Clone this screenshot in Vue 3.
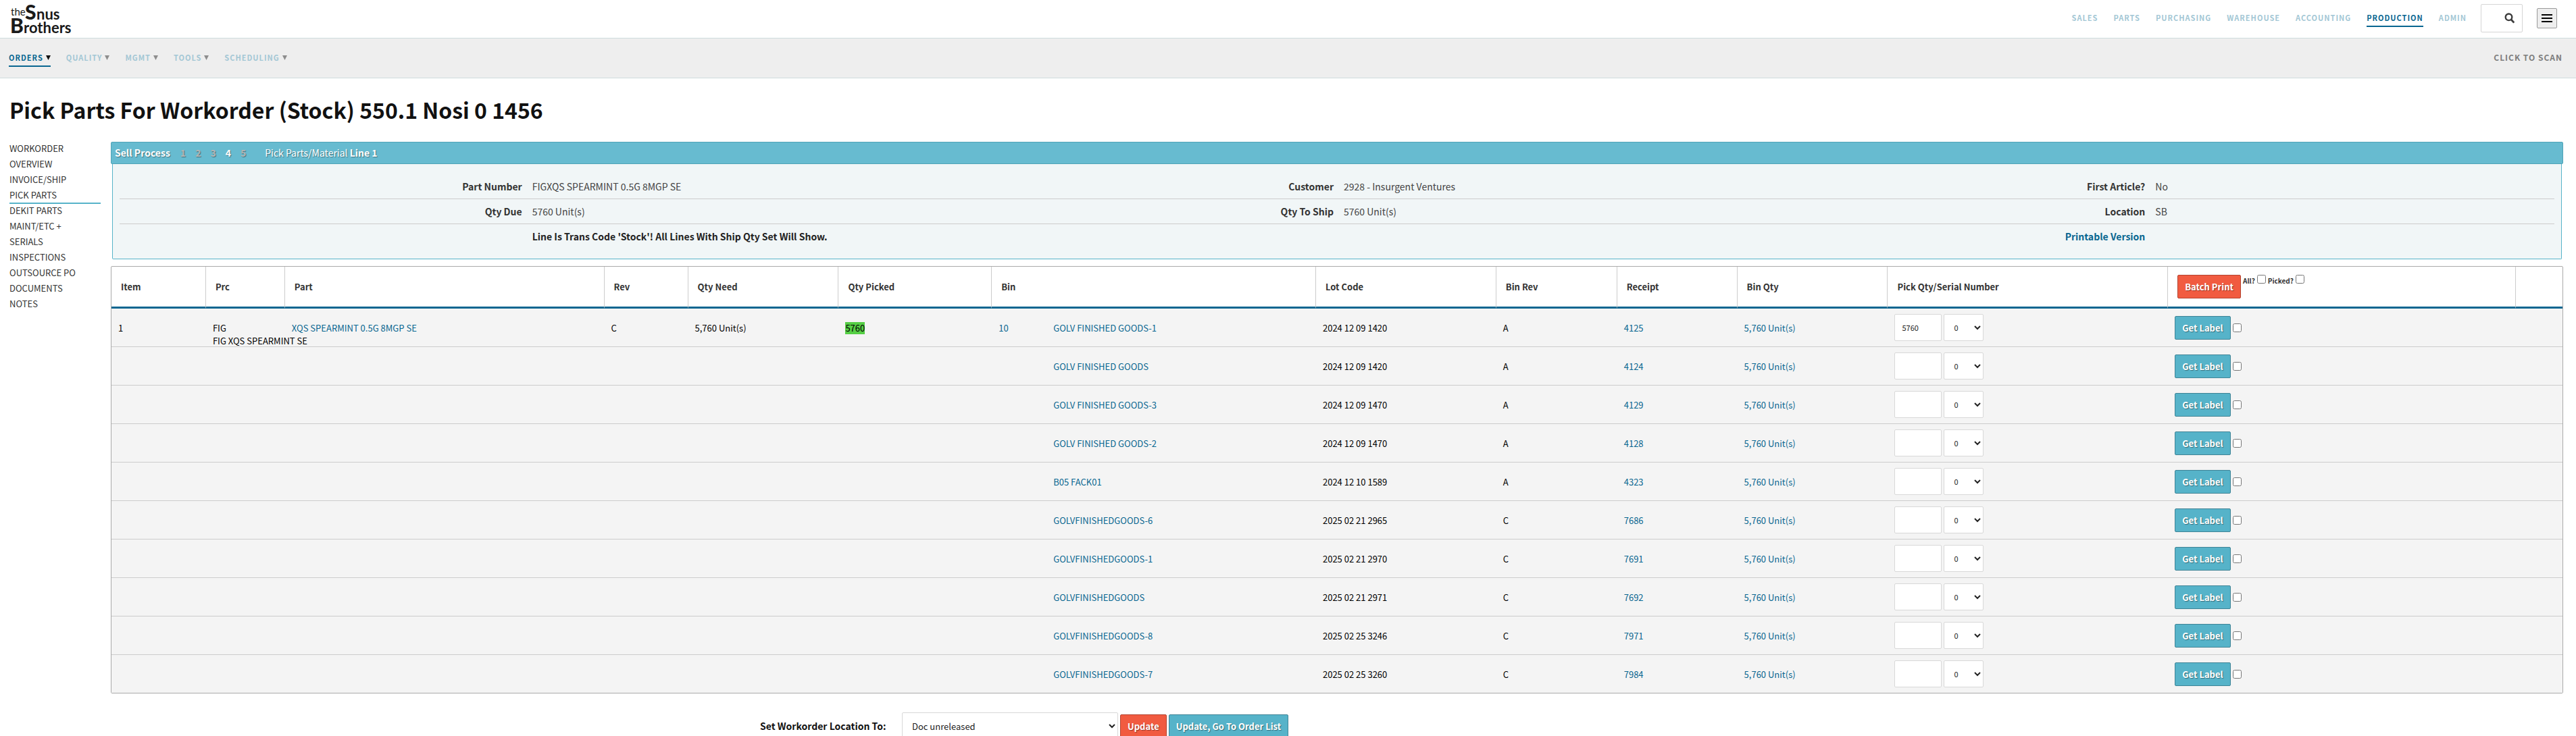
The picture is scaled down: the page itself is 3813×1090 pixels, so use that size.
<script setup>
import { ref } from 'vue'

const mainNav = ['Sales', 'Parts', 'Purchasing', 'Warehouse', 'Accounting', 'Production', 'Admin']
const subNav = ['Orders', 'Quality', 'Mgmt', 'Tools', 'Scheduling']
const sideNav = ['Workorder', 'Overview', 'Invoice/Ship', 'Pick Parts', 'Dekit Parts', 'Maint/Etc +', 'Serials', 'Inspections', 'Outsource PO', 'Documents', 'Notes']

const details = [
  [['Part Number', 'FIGXQS SPEARMINT 0.5G 8MGP SE'], ['Customer', '2928 - Insurgent Ventures'], ['First Article?', 'No']],
  [['Qty Due', '5760 Unit(s)'], ['Qty To Ship', '5760 Unit(s)'], ['Location', 'SB']],
]

const columns = [
  { title: 'Item', share: 140 },
  { title: 'Prc', share: 117 },
  { title: 'Part', share: 473 },
  { title: 'Rev', share: 124 },
  { title: 'Qty Need', share: 223 },
  { title: 'Qty Picked', share: 227 },
  { title: 'Bin', share: 480 },
  { title: 'Lot Code', share: 267 },
  { title: 'Bin Rev', share: 179 },
  { title: 'Receipt', share: 178 },
  { title: 'Bin Qty', share: 223 },
  { title: 'Pick Qty/Serial Number', share: 415 },
  { title: '', share: 515, batch: true },
  { title: '', share: 69 },
]
const total = columns.reduce((sum, c) => sum + c.share, 0)

const rows = ref([
  { bin: 'GOLV FINISHED GOODS-1', lot: '2024 12 09 1420', rev: 'A', receipt: '4125', pick: '5760' },
  { bin: 'GOLV FINISHED GOODS', lot: '2024 12 09 1420', rev: 'A', receipt: '4124', pick: '' },
  { bin: 'GOLV FINISHED GOODS-3', lot: '2024 12 09 1470', rev: 'A', receipt: '4129', pick: '' },
  { bin: 'GOLV FINISHED GOODS-2', lot: '2024 12 09 1470', rev: 'A', receipt: '4128', pick: '' },
  { bin: 'B05 FACK01', lot: '2024 12 10 1589', rev: 'A', receipt: '4323', pick: '' },
  { bin: 'GOLVFINISHEDGOODS-6', lot: '2025 02 21 2965', rev: 'C', receipt: '7686', pick: '' },
  { bin: 'GOLVFINISHEDGOODS-1', lot: '2025 02 21 2970', rev: 'C', receipt: '7691', pick: '' },
  { bin: 'GOLVFINISHEDGOODS', lot: '2025 02 21 2971', rev: 'C', receipt: '7692', pick: '' },
  { bin: 'GOLVFINISHEDGOODS-8', lot: '2025 02 25 3246', rev: 'C', receipt: '7971', pick: '' },
  { bin: 'GOLVFINISHEDGOODS-7', lot: '2025 02 25 3260', rev: 'C', receipt: '7984', pick: '' },
])
</script>

<template>
  <div class="page">
    <header class="top">
      <a href="#" class="logo" aria-label="the Snus Brothers">
        <svg width="92" height="48" viewBox="0 0 92 48">
          <text x="0" y="20" class="logo-the">the</text>
          <text x="21" y="26" class="logo-cap">S</text>
          <text x="38" y="26" class="logo-word">nus</text>
          <text x="-1" y="46" class="logo-cap">B</text>
          <text x="19" y="46" class="logo-word">rothers</text>
        </svg>
      </a>
      <nav class="main-nav">
        <a v-for="item in mainNav" :key="item" href="#" :class="{ active: item === 'Production' }">{{ item }}</a>
      </nav>
      <button class="search" aria-label="Search">
        <svg width="16" height="16" viewBox="0 0 16 16" fill="none" stroke="#3c3c3c">
          <circle cx="6.5" cy="6.3" r="4.8" stroke-width="2.4" />
          <path d="M9.8 9.8 L14.3 14.6" stroke-width="2.8" />
        </svg>
      </button>
      <button class="menu" aria-label="Menu">
        <svg width="16" height="12" viewBox="0 0 16 12">
          <path d="M0 1h16M0 6h16M0 11h16" stroke="#000" stroke-width="2" />
        </svg>
      </button>
    </header>

    <div class="sub">
      <nav class="sub-nav">
        <a v-for="item in subNav" :key="item" href="#" :class="{ active: item === 'Orders' }">{{ item }}<svg class="caret" width="7" height="7" viewBox="0 0 7 7"><path d="M0 0h7L3.500 7z" fill="currentColor" /></svg></a>
      </nav>
      <a href="#" class="scan">Click to scan</a>
    </div>

    <h1>Pick Parts For Workorder (Stock) 550.1 Nosi 0 1456</h1>

    <div class="body">
      <nav class="side">
        <a v-for="item in sideNav" :key="item" href="#" :class="{ active: item === 'Pick Parts' }">{{ item }}</a>
      </nav>

      <main>
        <div class="process">
          <b>Sell Process</b>
          <span class="steps"><b v-for="n in 5" :key="n" :class="{ current: n === 4 }">{{ n }}</b></span>
          <span>Pick Parts/Material <b>Line 1</b></span>
        </div>

        <section class="details">
          <div v-for="(line, i) in details" :key="i" class="line">
            <template v-for="[name, value] in line" :key="name">
              <b class="name">{{ name }}</b><span class="value">{{ value }}</span>
            </template>
          </div>
          <div class="line">
            <b class="name"></b><b class="value note">Line Is Trans Code 'Stock'! All Lines With Ship Qty Set Will Show.</b>
            <span></span><span></span>
            <a href="#" class="name print">Printable Version</a><span></span>
          </div>
        </section>

        <table>
          <colgroup>
            <col v-for="(c, i) in columns" :key="i" :style="{ width: (c.share / total) * 100 + '%' }" />
          </colgroup>
          <thead>
            <tr>
              <th v-for="(c, i) in columns" :key="i">
                <div v-if="c.batch" class="batch">
                  <button class="btn red">Batch Print</button>
                  <label>All?<input type="checkbox" /></label>
                  <label>Picked?<input type="checkbox" /></label>
                </div>
                <template v-else>{{ c.title }}</template>
              </th>
            </tr>
          </thead>
          <tbody>
            <tr v-for="(r, i) in rows" :key="r.receipt">
              <template v-if="i === 0">
                <td>1</td>
                <td class="prc"><div>FIG<br />FIG XQS SPEARMINT SE</div></td>
                <td><a href="#">XQS SPEARMINT 0.5G 8MGP SE</a></td>
                <td>C</td>
                <td>5,760 Unit(s)</td>
                <td><span class="picked">5760</span></td>
              </template>
              <template v-else><td></td><td></td><td></td><td></td><td></td><td></td></template>
              <td><div class="bin"><span class="order"><a v-if="i === 0" href="#">10</a></span><a href="#">{{ r.bin }}</a></div></td>
              <td>{{ r.lot }}</td>
              <td>{{ r.rev }}</td>
              <td><a href="#">{{ r.receipt }}</a></td>
              <td><a href="#">5,760 Unit(s)</a></td>
              <td>
                <div class="pick">
                  <input v-model="r.pick" type="text" aria-label="Pick quantity" />
                  <select aria-label="Serial count"><option>0</option></select>
                </div>
              </td>
              <td>
                <div class="label-cell">
                  <button class="btn">Get Label</button>
                  <input type="checkbox" aria-label="Select label" />
                </div>
              </td>
              <td></td>
            </tr>
          </tbody>
        </table>

        <form class="location" @submit.prevent>
          <label for="loc">Set Workorder Location To:</label>
          <select id="loc"><option>Doc unreleased</option></select>
          <button class="btn red">Update</button>
          <button class="btn">Update, Go To Order List</button>
        </form>
      </main>
    </div>
  </div>
</template>

<style>
body {
  margin: 0;
  background: #fff;
}
</style>

<style scoped>
.page {
  font-family: "Noto Sans CJK SC", "Noto Sans", sans-serif;
  font-size: 13px;
  line-height: 19px;
  color: #111;
}
* {
  box-sizing: border-box;
}
a {
  color: #086690;
  text-decoration: none;
}
button, input, select {
  font-family: inherit;
  margin: 0;
}
.top {
  display: flex;
  align-items: center;
  height: 57px;
  padding: 0 28px 3px 16px;
  border-bottom: 1px solid #cfdcdd;
}
.logo {
  margin-right: auto;
  height: 48px;
}
.logo svg {
  display: block;
  overflow: visible;
}
.logo text {
  font-family: Lato, sans-serif;
  fill: #1a1a1a;
}
.logo .logo-the { font-size: 15px; font-weight: 400; }
.logo .logo-cap { font-size: 30px; font-weight: 900; }
.logo .logo-word { font-size: 22px; font-weight: 700; }
.main-nav, .sub-nav {
  display: flex;
  gap: 23px;
}
.main-nav a, .sub-nav a, .scan {
  font-size: 11px;
  font-weight: 700;
  line-height: 24px;
  letter-spacing: 1px;
  text-transform: uppercase;
  color: #a3c7d5;
  border-bottom: 2px solid transparent;
}
.sub-nav a {
  display: flex;
  align-items: center;
}
.main-nav .active, .sub-nav .active {
  color: #086690;
  border-color: #086690;
}
.caret {
  margin-left: 4px;
  color: #8d8d8d;
}
.active .caret {
  color: #111;
}
.search {
  display: flex;
  align-items: center;
  justify-content: flex-end;
  width: 62px;
  height: 42px;
  margin-left: 21px;
  padding: 0 10px;
  background: #fff;
  border: 1px solid #d5d5d5;
  border-radius: 2px;
}
.menu {
  display: flex;
  align-items: center;
  justify-content: center;
  width: 30px;
  height: 30px;
  margin-left: 21px;
  padding: 0;
  background: #eee;
  border: 1px solid #999;
  border-radius: 2px;
}
.sub {
  display: flex;
  align-items: center;
  justify-content: space-between;
  height: 59px;
  padding: 0 20px 0 13px;
  background: #eee;
  border-bottom: 1px solid #cfdcdd;
}
.sub .scan {
  font-size: 12px;
  color: #7d7d7d;
}
h1 {
  margin: 22px 14px 24px;
  font-size: 32px;
  line-height: 48px;
  font-weight: 700;
}
.body {
  display: flex;
  align-items: flex-start;
  gap: 15px;
  padding: 0 19px 0 14px;
}
.side {
  flex: 0 0 135px;
  display: flex;
  flex-direction: column;
}
.side a {
  height: 23px;
  line-height: 19px;
  text-transform: uppercase;
  color: #333;
  border-bottom: 2px solid transparent;
}
.side .active {
  border-color: #56b3c9;
}
main {
  flex: 1;
  min-width: 0;
}
.process {
  display: flex;
  align-items: center;
  height: 33px;
  padding: 0 5px;
  background: #67bbd0;
  border: 1px solid #4fa3b7;
  border-radius: 2px;
  color: #fff;
  font-size: 14px;
  text-shadow: 1px 1px 1px rgba(0, 0, 0, 0.4);
}
.steps {
  display: flex;
  gap: 14px;
  margin: 0 28px 0 15px;
  color: #b5b5b5;
}
.steps .current {
  color: #fff;
}
.details {
  margin: 0 2px 10px;
  padding: 15px 10px 14px;
  background: #f1f6f7;
  border: 1px solid #56b3c9;
  border-top: 0;
  border-radius: 0 0 2px 2px;
  font-size: 14px;
  color: #444;
}
.line {
  display: grid;
  grid-template-columns: repeat(6, 1fr);
  height: 37px;
  padding-top: 8px;
  border-bottom: 1px solid #ccc;
  line-height: 20px;
}
.line:last-child {
  border-bottom: 0;
}
.name {
  padding-right: 5px;
  text-align: right;
  font-weight: 700;
  color: #333;
}
.value {
  padding-left: 10px;
  white-space: nowrap;
}
.note {
  color: #222;
}
.print {
  color: #086690;
}
table {
  width: 100%;
  table-layout: fixed;
  border-spacing: 0;
  border: 1px solid #aaa;
  border-radius: 2px;
  color: #000;
}
th {
  height: 62px;
  padding: 0 14px;
  text-align: left;
  font-weight: 700;
  color: #333;
  border-bottom: 3px solid #086690;
  border-right: 1px solid #ccc;
}
th:last-child {
  border-right: 0;
}
td {
  height: 57px;
  padding: 0 10px;
  background: #f4f4f4;
  border-bottom: 1px solid #ccc;
  white-space: nowrap;
}
tbody tr:last-child td {
  height: 56px;
  border-bottom: 0;
}
.prc div {
  height: 19px;
}
.picked {
  display: inline-block;
  height: 18px;
  line-height: 18px;
  background: #55ce45;
}
.bin, .pick, .label-cell, .batch {
  display: flex;
  align-items: center;
}
.order {
  width: 81px;
}
.pick {
  gap: 3px;
}
.pick input, select {
  height: 40px;
  padding: 0 10px;
  background: #fff;
  border: 1px solid #d8d8d8;
  border-radius: 2px;
  color: #222;
  font-size: 11px;
}
.pick input {
  width: 70px;
}
.pick select {
  width: 59px;
}
input[type="checkbox"] {
  width: 13px;
  height: 13px;
}
.label-cell {
  gap: 3px;
}
.batch {
  align-items: flex-start;
}
.batch label {
  display: flex;
  margin-left: 3px;
  font-size: 10px;
  line-height: 18px;
}
.batch label input {
  margin-left: 3px;
}
.btn {
  height: 35px;
  padding: 0 10px;
  background: #56b3c9;
  border: 1px solid #3f8496;
  border-radius: 2px;
  color: #fff;
  font-size: 13px;
  font-weight: 700;
  white-space: nowrap;
  text-shadow: 1px 1px 1px rgba(0, 0, 0, 0.4);
}
.red {
  background: #f15b40;
  border-color: #b3432f;
}
.location {
  display: flex;
  align-items: center;
  gap: 3px;
  margin: 28px 0 0 961px;
}
.location label {
  width: 207px;
  font-size: 14px;
  font-weight: 700;
}
.location select {
  width: 320px;
  font-size: 13px;
}
</style>
